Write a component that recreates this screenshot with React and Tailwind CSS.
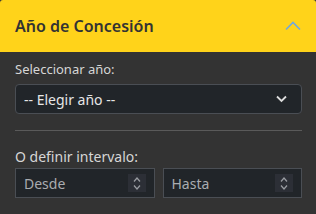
export default function App() {
  return (
    <div className="w-[316px] h-[214px] bg-[#333333] font-['Noto_Sans',sans-serif] overflow-hidden">
      <div className="h-[52px] bg-[#ffd31a] rounded-t-[3px] flex items-center justify-between pl-[15px] pr-[15px]">
        <span className="text-[16px] font-semibold text-[#333333]">Año de Concesión</span>
        <svg width="16" height="10" viewBox="0 0 16 10" fill="none" stroke="#72a8de" strokeWidth="1.6">
          <path d="M1 8.5 L8 1.5 L15 8.5" />
        </svg>
      </div>
      <div className="pl-[15px] pr-[14px]">
        <div className="pt-[7px] text-[13px] leading-[20px] text-[#d6d6d6]">Seleccionar año:</div>
        <div className="relative mt-[5px]">
          <select className="appearance-none w-full h-[30px] bg-[#212529] border border-[#4a4e54] rounded-[4px] pl-[8px] text-[14px] text-[#e6e6e6] outline-none">
            <option>-- Elegir año --</option>
          </select>
          <svg className="absolute right-[15px] top-[11px] pointer-events-none" width="11" height="8" viewBox="0 0 11 8" fill="none" stroke="#dddddd" strokeWidth="1.8">
            <path d="M1 1.5 L5.5 6 L10 1.5" />
          </svg>
        </div>
        <div className="mt-[16px] h-px bg-[#5a5a5a]" />
        <div className="pt-[16px] text-[14px] leading-[20px] text-[#d6d6d6]">O definir intervalo:</div>
        <div className="flex gap-[8px] mt-[1px]">
          {["Desde", "Hasta"].map((t) => (
            <div key={t} className="flex-1 h-[30px] bg-[#212529] border border-[#4a4e54] flex items-center justify-between pl-[8px] pr-[8px]">
              <span className="text-[14px] text-[#a9acb0]">{t}</span>
              <div className="w-[18px] h-[18px] bg-[#2c2f36] flex flex-col items-center justify-center gap-[3px]">
                <svg width="8" height="5" viewBox="0 0 8 5" fill="none" stroke="#9a9da2" strokeWidth="1.2"><path d="M1 4.5 L4 1 L7 4.5" /></svg>
                <svg width="8" height="5" viewBox="0 0 8 5" fill="none" stroke="#9a9da2" strokeWidth="1.2"><path d="M1 0.5 L4 4 L7 0.5" /></svg>
              </div>
            </div>
          ))}
        </div>
      </div>
    </div>
  );
}
